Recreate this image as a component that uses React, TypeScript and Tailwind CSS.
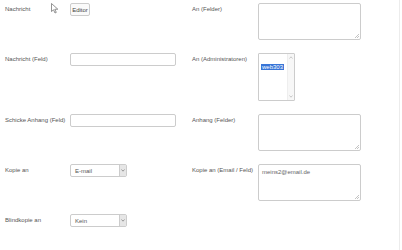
import React from 'react';

function Label({ children }: { children: React.ReactNode }) {
  return <div className="whitespace-nowrap pt-[2px] text-[6px] leading-[9px] text-[#555]">{children}</div>;
}

function TextArea({ value }: { value?: string }) {
  return (
    <div className="relative h-[37px] w-[103px] rounded-[2px] border border-[#ccc] bg-white px-[3px] py-[3px] text-[6px] leading-[9px] text-[#666]">
      {value}
      {/* resize grip */}
      <svg className="absolute bottom-[1px] right-[1px]" width="5" height="5" viewBox="0 0 5 5">
        <path d="M1 5L5 1M3 5L5 3" stroke="#aaa" strokeWidth="0.7" />
      </svg>
    </div>
  );
}

function TextInput() {
  return <div className="h-[13px] w-[106px] rounded-[2px] border border-[#ccc] bg-white" />;
}

function Dropdown({ value }: { value: string }) {
  return (
    <div className="flex h-[13px] w-[57px] items-stretch rounded-[2px] border border-[#ccc] bg-white text-[6px] leading-none text-[#555]">
      <div className="flex flex-1 items-center pl-[4px]">{value}</div>
      <div className="flex w-[7px] items-center justify-center border-l border-[#ccc] bg-[#e6e6e6]">
        <svg width="4" height="3" viewBox="0 0 4 3">
          <path d="M0.5 0.5L2 2.2L3.5 0.5" fill="none" stroke="#777" strokeWidth="0.7" />
        </svg>
      </div>
    </div>
  );
}

function ListBox() {
  return (
    <div className="flex h-[48px] w-[37px] rounded-[1px] border border-[#ccc] bg-white">
      <div className="flex-1 pl-[2px] pt-[2px] leading-none">
        <span className="bg-[#3875d7] px-[1px] text-[6px] leading-[8px] text-white">web303</span>
      </div>
      <div className="flex w-[7px] flex-col items-center justify-between border-l border-[#eee] bg-[#f7f7f7] py-[2px]">
        <svg width="4" height="3" viewBox="0 0 4 3">
          <path d="M0.5 2.5L2 0.8L3.5 2.5" fill="none" stroke="#aaa" strokeWidth="0.6" />
        </svg>
        <svg width="4" height="3" viewBox="0 0 4 3">
          <path d="M0.5 0.5L2 2.2L3.5 0.5" fill="none" stroke="#aaa" strokeWidth="0.6" />
        </svg>
      </div>
    </div>
  );
}

export default function App() {
  return (
    <div className="relative h-[250px] w-[402px] overflow-hidden bg-white font-['Liberation_Sans',Arial,sans-serif]">
      <div className="absolute right-[2px] top-0 h-full w-px bg-[#ececec]" />

      <div className="grid grid-cols-[65px_122px_66px_1fr] gap-y-[13px] pl-[5px] pt-[3px]">
        {/* row 1 */}
        <Label>Nachricht</Label>
        <div className="relative flex">
          <div className="flex h-[13px] w-[20px] items-center justify-center rounded-[2px] border border-[#ccc] bg-[#fafafa] text-[6px] leading-none text-[#444]">
            Editor
          </div>
          {/* mouse cursor */}
          <svg className="absolute left-[-19px] top-[0px]" width="8" height="11" viewBox="0 0 8 11">
            <path d="M0.5 0.5L0.5 8.5L2.5 6.8L4 10L5.3 9.4L3.8 6.3L6.8 6.2Z" fill="white" stroke="#666" strokeWidth="0.7" />
          </svg>
        </div>
        <Label>An (Felder)</Label>
        <TextArea />

        {/* row 2 */}
        <Label>Nachricht (Feld)</Label>
        <TextInput />
        <Label>An (Administratoren)</Label>
        <ListBox />

        {/* row 3 */}
        <Label>Schicke Anhang (Feld)</Label>
        <TextInput />
        <Label>Anhang (Felder)</Label>
        <TextArea />

        {/* row 4 */}
        <Label>Kopie an</Label>
        <Dropdown value="E-mail" />
        <Label>Kopie an (Email / Feld)</Label>
        <TextArea value="meins2@email.de" />

        {/* row 5 */}
        <Label>Blindkopie an</Label>
        <Dropdown value="Kein" />
        <div />
        <div />
      </div>
    </div>
  );
}
